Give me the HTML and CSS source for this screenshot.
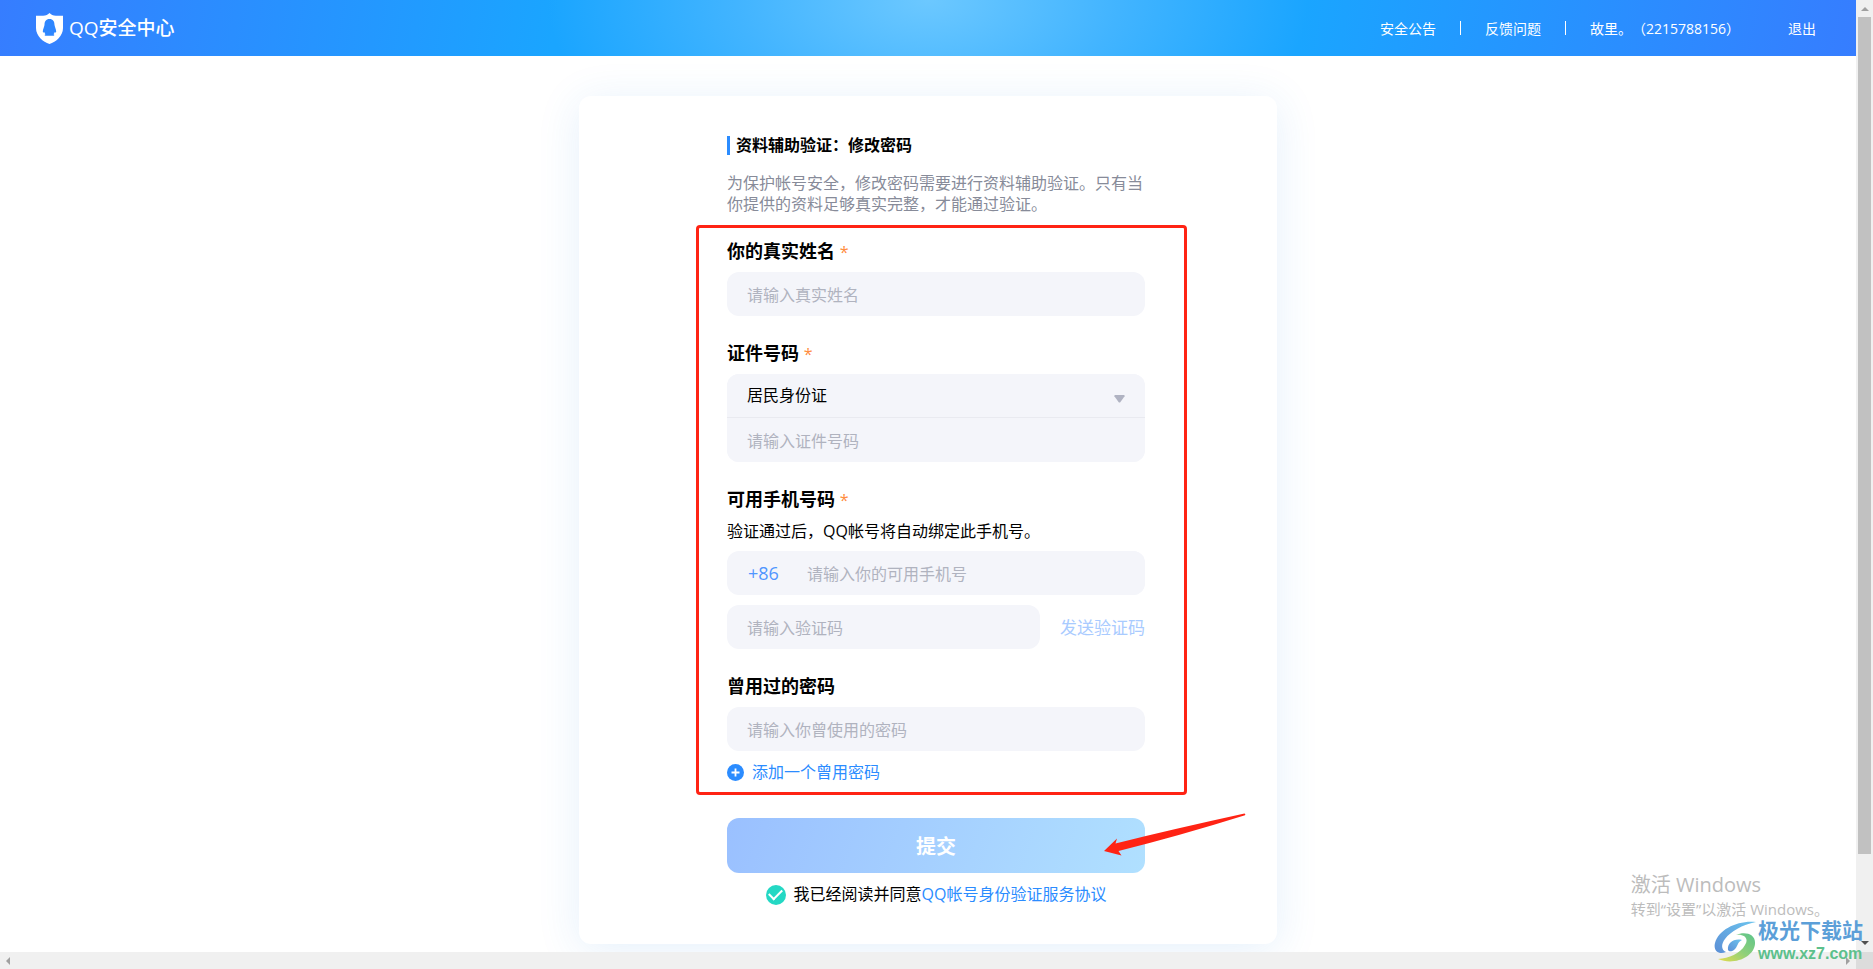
FILE: index.html
```
<!DOCTYPE html>
<html lang="zh-CN">
<head>
<meta charset="utf-8">
<title>QQ安全中心</title>
<link rel="stylesheet" href="styles.css">
</head>
<body>
<div class="window">
  <div class="page">
    <header class="topbar">
      <a class="brand" href="#">
        <svg class="brand-icon" viewBox="0 0 27 31" aria-hidden="true">
          <path fill="#fff" d="M13.500 0C15 1.500 17 2.800 20 2.800H27V15C27 23 20 29 13.500 31C7 29 0 23 0 15V2.800H7C10 2.800 12 1.500 13.500 0Z"/>
          <path fill="#2e86ff" d="M13.500 6C10 6 8.500 8.500 8.500 12C8 14.500 6.800 16.500 6.800 18.800C7 20 7.700 19.600 8.200 19C8.500 20 9 20.800 9.500 21.300C8.600 21.700 8.300 22.600 9.400 22.700H12.500C13.200 22.700 13.800 22.700 14.500 22.700H17.600C18.700 22.600 18.400 21.700 17.500 21.300C18 20.800 18.500 20 18.800 19C19.300 19.600 20 20 20.200 18.800C20.200 16.500 19 14.500 18.500 12C18.500 8.500 17 6 13.500 6Z"/>
        </svg>
        <span class="brand-name">QQ安全中心</span>
      </a>
      <nav class="topnav">
        <a href="#">安全公告</a>
        <span class="divider"></span>
        <a href="#">反馈问题</a>
        <span class="divider"></span>
        <span class="account">故里。（2215788156）</span>
        <a class="logout" href="#">退出</a>
      </nav>
    </header>

    <main class="content">
      <form class="card">
        <h1 class="title">资料辅助验证：修改密码</h1>
        <p class="intro">为保护帐号安全，修改密码需要进行资料辅助验证。只有当你提供的资料足够真实完整，才能通过验证。</p>

        <div class="fields">
          <section class="field">
            <label class="label" for="name">你的真实姓名 <span class="star">*</span></label>
            <input class="input" id="name" type="text" placeholder="请输入真实姓名">
          </section>

          <section class="field">
            <label class="label" for="idno">证件号码 <span class="star">*</span></label>
            <div class="stack">
              <div class="select-wrap">
                <select class="input select" aria-label="证件类型"><option>居民身份证</option></select>
                <svg class="caret" viewBox="0 0 11 8" aria-hidden="true"><path fill="#b0b3c2" d="M1 0H10Q11 .3 10.600 1.200L6.300 7.200Q5.500 8 4.700 7.200L.4 1.200Q0 .3 1 0Z"/></svg>
              </div>
              <input class="input" id="idno" type="text" placeholder="请输入证件号码">
            </div>
          </section>

          <section class="field">
            <label class="label" for="phone">可用手机号码 <span class="star">*</span></label>
            <p class="note">验证通过后，QQ帐号将自动绑定此手机号。</p>
            <div class="phone">
              <span class="prefix">+86</span>
              <input class="input" id="phone" type="tel" placeholder="请输入你的可用手机号">
            </div>
            <div class="code">
              <input class="input" type="text" aria-label="验证码" placeholder="请输入验证码">
              <button class="send" type="button">发送验证码</button>
            </div>
          </section>

          <section class="field">
            <label class="label" for="oldpw">曾用过的密码</label>
            <input class="input" id="oldpw" type="text" placeholder="请输入你曾使用的密码">
            <button class="add" type="button">
              <svg class="add-icon" viewBox="0 0 17 17" aria-hidden="true"><circle cx="8.500" cy="8.500" r="8.500" fill="#2b8cff"/><path d="M8.500 4.500V12.500M4.500 8.500H12.500" stroke="#fff" stroke-width="1.800"/></svg>
              添加一个曾用密码
            </button>
          </section>
        </div>

        <div class="submit-row">
          <button class="submit" type="submit">提交</button>
          <svg class="arrow" viewBox="0 0 142 44" aria-hidden="true"><path fill="#ff2314" d="M0 38L13 25.500L11.500 30.500Q70 16 140.500 .6Q142 1 141 2.300Q75 23 14.500 38L17.500 42.500Z"/></svg>
        </div>

        <div class="agree">
          <input class="check" id="agree" type="checkbox" checked>
          <label for="agree">我已经阅读并同意</label><a href="#">QQ帐号身份验证服务协议</a>
        </div>
      </form>
    </main>
  </div>

  <div class="vbar" aria-hidden="true">
    <span class="tri up"></span>
    <span class="thumb"></span>
    <span class="tri down"></span>
  </div>
  <div class="hbar" aria-hidden="true">
    <span class="tri left"></span>
    <span class="tri right"></span>
  </div>
  <div class="corner"></div>

  <aside class="activate">
    <p class="activate-title">激活 Windows</p>
    <p class="activate-text">转到“设置”以激活 Windows。</p>
  </aside>

  <div class="site-mark">
    <svg class="swirl" viewBox="0 0 42 42" aria-hidden="true">
      <defs>
        <linearGradient id="sw1" x1="0" y1="1" x2="1" y2="0"><stop offset="0" stop-color="#5c8fd6"/><stop offset="1" stop-color="#6cc4ee"/></linearGradient>
        <linearGradient id="sw2" x1="0" y1="1" x2="1" y2="0"><stop offset="0" stop-color="#e6dc4c"/><stop offset=".5" stop-color="#8fd07a"/><stop offset="1" stop-color="#5cc48c"/></linearGradient>
      </defs>
      <path fill="url(#sw1)" d="M42 1C24 -1 5 8 1 22C-1 30 5 34 12 31C7 29 7 23 11 18C17 10 28 4 42 1Z"/>
      <path fill="url(#sw1)" d="M14 29C13 22 20 17 28 19C23 21 24 26 20 29C18 30.500 15 31 14 29Z"/>
      <path fill="url(#sw2)" d="M22 14C31 13 35 18 31 24C26 33 15 37 4 38C20 45 40 36 41 23C42 13 31 10 22 14Z"/>
    </svg>
    <div class="site-text">
      <span class="site-name">极光下载站</span>
      <span class="site-url">www.xz7.com</span>
    </div>
  </div>
</div>
</body>
</html>
```
FILE: styles.css
```
* { box-sizing: border-box; }

body {
  margin: 0;
  background: #fff;
  color: #000;
  font: 16px/21px "Open Sans", "Noto Sans CJK SC", sans-serif;
  text-spacing-trim: space-all;
}

h1, p { margin: 0; }
a { color: inherit; text-decoration: none; }
button { padding: 0; border: 0; background: none; font: inherit; cursor: pointer; }

.window {
  position: relative;
  display: grid;
  grid-template-columns: 1fr 17px;
  grid-template-rows: 1fr 17px;
  min-height: 100vh;
}

.page { min-width: 0; overflow: hidden; }

/* Top bar */
.topbar {
  display: flex;
  align-items: center;
  justify-content: space-between;
  height: 56px;
  padding: 0 40px 0 36px;
  color: #fff;
  background:
    radial-gradient(ellipse 380px 210px at 50% 0, #6cc8ff 0%, rgba(76, 184, 255, 0.8) 50%, rgba(26, 165, 255, 0) 100%),
    linear-gradient(100deg, #367dff 0%, #1aa5ff 30%, #1aa5ff 70%, #367dff 100%);
}
.brand { display: flex; align-items: center; gap: 6px; }
.brand-icon { width: 27px; height: 31px; }
.brand-name { font-size: 19px; font-weight: 500; }
.topnav { display: flex; align-items: center; gap: 24px; font-size: 14px; }
.divider { width: 1px; height: 14px; background: #fff; }
.logout { margin-left: 24px; }

/* Card */
.content { display: flex; justify-content: center; padding: 40px 0 8px; }
.card {
  width: 698px;
  padding: 40px 132px 39px 148px;
  border-radius: 12px;
  background: #fff;
  box-shadow: 0 6px 44px rgba(40, 130, 220, 0.12);
}
.title {
  padding-left: 6px;
  border-left: 3px solid #2b8cff;
  font-size: 16px;
  line-height: 19px;
  font-weight: 700;
}
.intro { margin-top: 18px; color: #878b99; }

/* Fields, framed in red */
.fields {
  position: relative;
  display: flex;
  flex-direction: column;
  gap: 25px;
  margin-top: 24px;
}
.fields::after {
  content: "";
  position: absolute;
  inset: -14px -42px -12px -31px;
  border: 3px solid #ff2314;
  border-radius: 4px;
  pointer-events: none;
}
.field { display: flex; flex-direction: column; }
.label { margin-bottom: 9px; font-size: 18px; line-height: 24px; font-weight: 700; }
.star { color: #ff8c40; font-size: 16px; line-height: 16px; font-weight: 400; }

.input {
  width: 100%;
  min-width: 0;
  height: 44px;
  padding: 2px 20px 0;
  border: 0;
  border-radius: 12px;
  background: #f4f5fa;
  color: #000;
  font: inherit;
  outline: 0;
}
.input::placeholder { color: #b0b3bf; opacity: 1; }

.stack { overflow: hidden; border-radius: 12px; background: #f4f5fa; }
.stack .input { display: block; border-radius: 0; }
.select-wrap { position: relative; border-bottom: 1px solid #e9eaf0; }
.select { height: 43px; padding-top: 0; appearance: none; }
.caret { position: absolute; top: 21px; right: 20px; width: 11px; height: 8px; pointer-events: none; }

.note { margin-bottom: 9px; line-height: 22px; }
.phone { display: flex; align-items: center; border-radius: 12px; background: #f4f5fa; }
.prefix { flex: none; width: 60px; padding-left: 21px; color: #5096ff; font-size: 18px; }
.code { display: flex; gap: 20px; margin-top: 10px; }
.code .input { flex: 1; }
.send { flex: none; color: #a9cbff; font-size: 17px; }

.add { display: flex; align-items: center; gap: 8px; margin-top: 11px; color: #2b8cff; }
.add-icon { width: 17px; height: 17px; }

/* Submit */
.submit-row { position: relative; margin-top: 35px; }
.submit {
  display: block;
  width: 100%;
  height: 55px;
  padding-top: 2px;
  border-radius: 12px;
  background: linear-gradient(110deg, #9ac0ff, #b0e0ff);
  color: #fff;
  font-size: 20px;
  font-weight: 700;
}
.arrow { position: absolute; top: -5px; right: -101px; width: 142px; height: 44px; pointer-events: none; }

.agree { display: flex; align-items: center; justify-content: center; margin-top: 11px; }
.agree a { color: #2b8cff; }
.check {
  width: 20px;
  height: 20px;
  margin: 0 8px 0 0;
  appearance: none;
  border-radius: 50%;
  background: #24d8c4;
  display: grid;
  place-items: center;
}
.check:checked::before {
  content: "";
  width: 11px;
  height: 6px;
  margin-bottom: 3px;
  border: solid #fff;
  border-width: 0 0 2px 2px;
  transform: rotate(-45deg);
}

/* Scroll bars */
.vbar { display: flex; flex-direction: column; align-items: center; gap: 6px; padding: 7px 0; background: #f0f0f0; }
.thumb { width: 13px; height: 0; flex: 0 1 837px; background: #c1c1c1; }
.hbar { display: flex; justify-content: space-between; align-items: center; padding: 0 6px; background: #f0f0f0; }
.corner { background: #dcdcdc; }
.tri { flex: none; border: 4px solid transparent; }
.up { border-top: 0; border-bottom-color: #a0a0a0; }
.down { margin-top: auto; border-bottom: 0; border-top-color: #505050; }
.left { border-left: 0; border-right-color: #a0a0a0; }
.right { border-right: 0; border-left-color: #a0a0a0; }

/* Watermarks over the page */
.activate { position: absolute; right: 44px; bottom: 49px; color: #bcbcbc; }
.activate-title { font-size: 20px; line-height: 26px; }
.activate-text { font-size: 15px; line-height: 22px; }
.site-mark { position: absolute; right: 10px; bottom: 4px; display: flex; align-items: center; gap: 2px; }
.swirl { width: 42px; height: 42px; }
.site-text { display: flex; flex-direction: column; }
.site-name { color: #5c9fd8; font-size: 21px; line-height: 25px; font-weight: 700; }
.site-url { color: #5cc08c; font: 700 16px/22px "Liberation Sans", sans-serif; }
```
